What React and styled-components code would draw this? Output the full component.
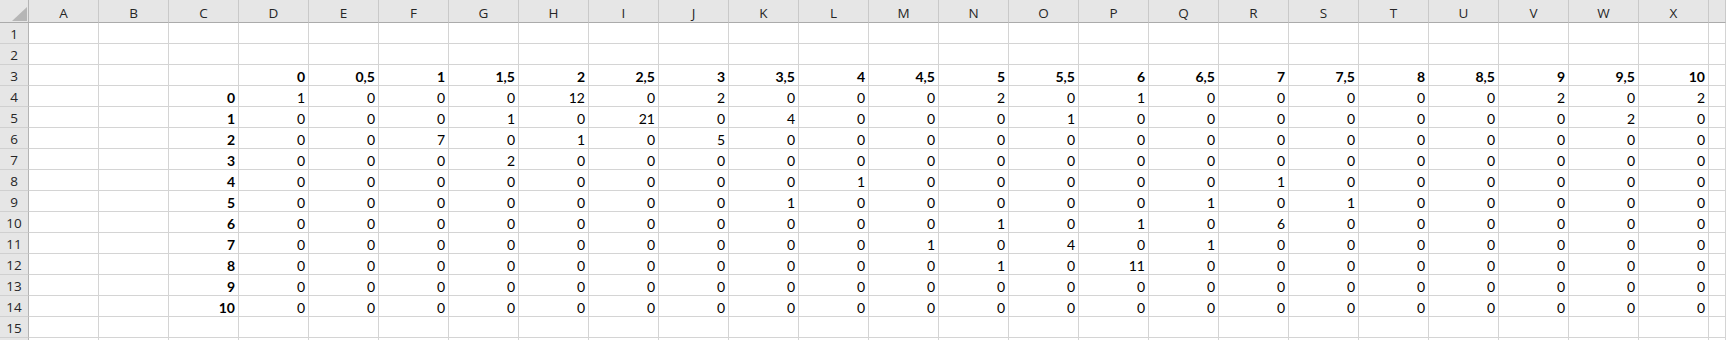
import React from "react";
import styled, { createGlobalStyle } from "styled-components";

const GlobalStyle = createGlobalStyle`
  html, body {
    margin: 0;
    padding: 0;
    background: #ffffff;
    overflow: hidden;
  }
`;

// Y is only a sliver at the right edge, so its letter sits off screen
const COLUMNS = "ABCDEFGHIJKLMNOPQRSTUVWXY".split("");
const VISIBLE_LETTERS = 24;
const ROW_COUNT = 15;

const headerValues = [
  "0", "0,5", "1", "1,5", "2", "2,5", "3", "3,5", "4", "4,5", "5",
  "5,5", "6", "6,5", "7", "7,5", "8", "8,5", "9", "9,5", "10",
];

const zeros = () => Array(21).fill(0);
const withValues = (pairs) => {
  const r = zeros();
  Object.entries(pairs).forEach(([col, v]) => {
    r[COLUMNS.indexOf(col) - 3] = v;
  });
  return r;
};

const matrix = [
  withValues({ D: 1, H: 12, J: 2, N: 2, P: 1, V: 2, X: 2 }),
  withValues({ G: 1, I: 21, K: 4, O: 1, W: 2 }),
  withValues({ F: 7, H: 1, J: 5 }),
  withValues({ G: 2 }),
  withValues({ L: 1, R: 1 }),
  withValues({ K: 1, Q: 1, S: 1 }),
  withValues({ N: 1, P: 1, R: 6 }),
  withValues({ M: 1, O: 4, Q: 1 }),
  withValues({ N: 1, P: 11 }),
  zeros(),
  zeros(),
];

const cellContent = (row, colIdx) => {
  if (row === 3 && colIdx >= 3 && colIdx <= 23) {
    return { text: headerValues[colIdx - 3], bold: true };
  }
  if (row >= 4 && row <= 14) {
    if (colIdx === 2) return { text: String(row - 4), bold: true };
    if (colIdx >= 3 && colIdx <= 23) {
      return { text: String(matrix[row - 4][colIdx - 3]), bold: false };
    }
  }
  return { text: "", bold: false };
};

const Sheet = styled.div`
  display: grid;
  grid-template-columns: 29px repeat(24, 70px) 17px;
  grid-template-rows: 23px repeat(${ROW_COUNT}, 21px) 3px;
  width: 1726px;
  height: 340px;
  overflow: hidden;
`;

const CornerCell = styled.div`
  position: relative;
  background: #e6e6e6;
  border-right: 1px solid #b4b4b4;
  border-bottom: 1px solid #ababab;
  box-sizing: border-box;

  svg {
    position: absolute;
    left: 12px;
    top: 7px;
  }
`;

const ColHeader = styled.div`
  box-sizing: border-box;
  background: #e6e6e6;
  border-right: 1px solid #c9c9c9;
  border-bottom: 1px solid #ababab;
  display: flex;
  align-items: center;
  justify-content: center;
  padding-top: 3px;
  font-family: "Open Sans", "Noto Sans", sans-serif;
  font-size: 13.5px;
  color: #262626;
`;

const RowHeader = styled.div`
  box-sizing: border-box;
  background: #e6e6e6;
  border-right: 1px solid #b4b4b4;
  border-bottom: 1px solid #d0d0d0;
  display: flex;
  align-items: center;
  justify-content: center;
  padding-top: 2px;
  font-family: "Open Sans", "Noto Sans", sans-serif;
  font-size: 13.5px;
  color: #262626;
`;

const Cell = styled.div`
  box-sizing: border-box;
  border-right: 1px solid #d4d4d4;
  border-bottom: 1px solid #d4d4d4;
  display: flex;
  align-items: flex-end;
  justify-content: flex-end;
  padding: 0 3px 0 0;
  font-family: Lato, "Liberation Sans", sans-serif;
  font-size: 14px;
  line-height: 17px;
  font-weight: ${(p) => (p.$bold ? 700 : 400)};
  color: #000000;
  overflow: hidden;
  white-space: nowrap;
`;

const SelectAll = () => (
  <svg width="15" height="14" viewBox="0 0 15 14">
    <polygon points="15,0 15,14 0,14" fill="#b6b6b6" />
  </svg>
);

export default function App() {
  const rows = Array.from({ length: ROW_COUNT + 1 }, (_, i) => i + 1);
  return (
    <>
      <GlobalStyle />
      <Sheet>
        <CornerCell>
          <SelectAll />
        </CornerCell>
        {COLUMNS.map((c, ci) => (
          <ColHeader key={c}>{ci < VISIBLE_LETTERS ? c : ""}</ColHeader>
        ))}
        {rows.map((r) => (
          <React.Fragment key={r}>
            <RowHeader>{r <= ROW_COUNT ? r : ""}</RowHeader>
            {COLUMNS.map((c, ci) => {
              const { text, bold } = cellContent(r, ci);
              return (
                <Cell key={c} $bold={bold}>
                  {text}
                </Cell>
              );
            })}
          </React.Fragment>
        ))}
      </Sheet>
    </>
  );
}
